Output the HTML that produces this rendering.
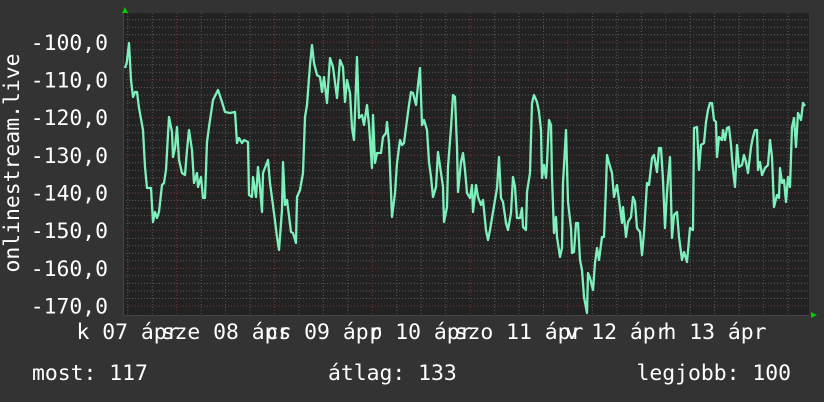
<!DOCTYPE html>
<html><head><meta charset="utf-8"><style>
html,body{margin:0;padding:0;background:#333;}
svg{display:block}
text{font-family:"DejaVu Sans Mono","Liberation Mono",monospace;font-size:21.4px;fill:#fff}
</style></head><body>
<svg width="824" height="402" viewBox="0 0 824 402" xmlns="http://www.w3.org/2000/svg">
<rect width="824" height="402" fill="#333"/>
<rect x="123" y="13" width="686" height="302" fill="#222"/>
<g stroke="#5a5a5a" stroke-width="1" stroke-dasharray="1,2" fill="none">
<path d="M127.8 13V315M152.3 13V315M201.2 13V315M225.6 13V315M250.1 13V315M299 13V315M323.4 13V315M347.9 13V315M396.8 13V315M421.2 13V315M445.7 13V315M494.6 13V315M519 13V315M543.5 13V315M592.4 13V315M616.8 13V315M641.3 13V315M690.2 13V315M714.6 13V315M739.1 13V315M788 13V315"/>
<path d="M123 19.7H809M123 27.2H809M123 34.8H809M123 49.8H809M123 57.4H809M123 64.9H809M123 72.4H809M123 87.5H809M123 95.1H809M123 102.6H809M123 110.1H809M123 125.2H809M123 132.7H809M123 140.3H809M123 147.8H809M123 162.8H809M123 170.4H809M123 177.9H809M123 185.5H809M123 200.5H809M123 208.1H809M123 215.6H809M123 223.1H809M123 238.2H809M123 245.7H809M123 253.3H809M123 260.8H809M123 275.8H809M123 283.4H809M123 290.9H809M123 298.5H809"/>
</g>
<g stroke="#7a3535" stroke-width="1" stroke-dasharray="1,2" fill="none">
<path d="M176.7 13V315M274.5 13V315M372.3 13V315M470.1 13V315M567.9 13V315M665.7 13V315M763.5 13V315"/>
<path d="M123 42.3H809M123 80H809M123 117.6H809M123 155.3H809M123 193H809M123 230.6H809M123 268.3H809M123 306H809"/>
</g>
<line x1="123.5" y1="13" x2="123.5" y2="315" stroke="#444"/>
<line x1="123" y1="315.5" x2="809" y2="315.5" stroke="#444"/>
<polygon points="122,13 128,13 125,7" fill="#0c0"/>
<polygon points="811,312 811,318 817,315" fill="#0c0"/>
<polyline fill="none" stroke="#7df0bb" stroke-width="2.3" stroke-linejoin="round" points="125,68 126.7,63 129,43 131,80 133,97 135,92 137,92 139,108 143,130 145,167 147,188 151,188 153,222 155,212 157,218 159,212 162,185 164,183 166,170 169,117 172,132 173,157 175,148 177,127 179,160 182,173 185,175 187,150 189,130 192,150 194,183 197,173 198,187 201,177 203,198 205,198 207,142 209,127 213,100 218,90 222,102 225,112 230,113 235,112 237,143 239,138 242,143 244,140 248,142 249,195 252,197 253,177 256,197 258,167 260,187 262,212 263,173 268,160 270,183 274,213 277,237 279,250 282,210 283,162 285,205 287,200 291,232 293,233 296,243 297,197 300,190 303,173 305,117 307,105 310,65 312,45 314,63 317,75 320,77 322,92 324,77 327,103 330,58 333,67 337,98 340,60 343,67 345,102 347,80 350,93 352,128 354,140 357,57 359,118 362,115 364,125 367,105 369,125 372,168 373,115 375,163 377,153 381,153 383,137 386,133 387,122 389,143 392,217 395,193 397,163 400,140 402,145 404,143 407,120 409,105 411,92 413,93 416,105 418,85 420,68 422,125 424,120 427,130 429,162 431,177 433,197 436,187 438,152 441,173 443,187 444,222 447,207 448,167 451,128 453,95 455,97 457,147 458,192 461,162 463,153 465,170 467,193 470,198 472,185 473,212 476,185 478,197 481,205 483,200 486,230 488,240 490,230 493,212 497,188 499,157 501,198 503,202 506,223 508,230 511,213 513,177 515,187 517,218 520,218 522,208 523,227 526,230 527,192 530,173 532,103 534,95 537,102 539,112 541,130 542,178 544,165 546,178 547,163 549,120 551,125 552,177 554,233 556,217 557,237 560,257 562,248 563,183 566,130 568,202 571,228 572,253 574,252 576,223 578,223 580,260 582,270 584,297 587,313 588,273 590,278 593,290 595,263 597,248 599,260 602,237 604,237 606,187 607,155 609,163 612,173 614,197 617,185 619,200 622,223 623,207 626,237 628,222 631,217 633,197 635,202 637,228 640,232 642,255 644,233 647,183 649,185 652,158 654,155 657,172 659,148 661,148 663,180 665,228 667,192 670,157 672,238 674,215 677,212 679,237 682,260 684,252 687,262 690,228 693,230 694,128 697,127 699,170 701,145 704,143 706,122 708,110 710,103 712,103 714,120 716,122 717,157 719,137 722,140 723,130 725,140 727,128 729,127 731,145 733,170 735,187 737,145 739,167 742,165 744,155 746,162 748,173 751,147 753,137 755,130 757,130 758,170 760,162 762,175 765,168 768,165 770,140 772,157 774,207 777,195 779,198 780,168 782,183 784,180 786,202 788,177 790,187 792,127 794,118 796,147 798,113 801,120 803,103 805,106"/>
<g text-anchor="end">
<text x="108" y="50">-100,0</text>
<text x="108" y="87.5">-110,0</text>
<text x="108" y="125">-120,0</text>
<text x="108" y="163">-130,0</text>
<text x="108" y="200.5">-140,0</text>
<text x="108" y="238">-150,0</text>
<text x="108" y="276">-160,0</text>
<text x="108" y="313.5">-170,0</text>
</g>
<text transform="translate(19,163) rotate(-90)" text-anchor="middle">onlinestream.live</text>
<g text-anchor="middle">
<text x="128" y="339">k 07 ápr</text>
<text x="226" y="339">sze 08 ápr</text>
<text x="323.5" y="339">cs 09 ápr</text>
<text x="421" y="339">p 10 ápr</text>
<text x="519" y="339">szo 11 ápr</text>
<text x="617" y="339">v 12 ápr</text>
<text x="715" y="339">h 13 ápr</text>
</g>
<text x="32" y="380">most: 117</text>
<text x="328" y="380">átlag: 133</text>
<text x="791" y="380" text-anchor="end">legjobb: 100</text>
</svg>
</body></html>
